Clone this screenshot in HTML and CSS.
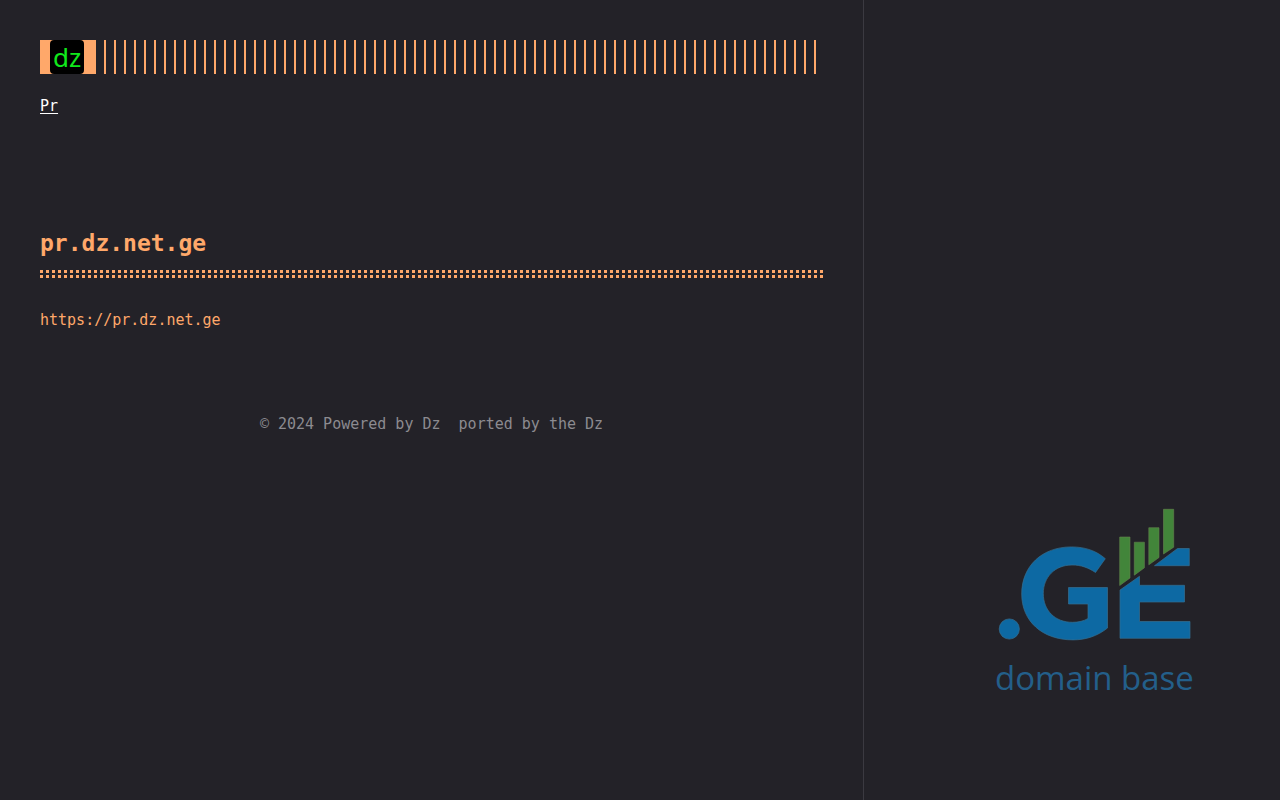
FILE: index.html
```html
<!DOCTYPE html>
<html lang="en">
<head>
<meta charset="utf-8">
<meta name="viewport" content="width=device-width, initial-scale=1">
<title>pr.dz.net.ge</title>
<link rel="stylesheet" href="styles.css">
</head>
<body>
<div class="page">
  <div class="container">
    <header class="header">
      <a class="logo" href="#"><span class="logo-mark">dz</span></a>
      <div class="stripes"></div>
    </header>
    <nav class="menu"><a class="menu-link" href="#">Pr</a></nav>
    <main class="post">
      <h1 class="post-title">pr.dz.net.ge</h1>
      <p class="post-text">https://pr.dz.net.ge</p>
    </main>
    <footer class="footer">© 2024 Powered by Dz&nbsp; ported by the Dz</footer>
  </div>
  <aside class="brand">
    <svg class="brand-logo" viewBox="0 0 220 200" role="img" aria-label=".GE domain base">
      <g fill="#0d69a3" stroke="#356f90" stroke-width="0.7">
        <circle cx="24.3" cy="129" r="10.1"/>
        <path d="M120.300 58.700 L110.500 72.500 C103 67.500 96 65 87 65 C70 65 58.300 77 58.300 93.500 C58.300 110.500 70 122.300 87.500 122.300 C93.500 122.300 99 121 103 118.500 V104 H83.500 V87.500 H122.500 V128 C112.500 136 101 139.900 88 139.900 C57 139.900 36.700 121 36.700 94 C36.700 66 57 46.900 86.500 46.900 C100 46.900 111.500 50.800 120.300 58.700Z"/>
        <path d="M135 90 L154.500 76.300 V85.300 H199.500 V102 H154.500 V121.500 H205 V138.300 H135Z"/>
        <path d="M169.500 65.700 L192.500 48.500 H204.300 V65.700Z"/>
      </g>
      <g fill="#42853a" stroke="#65844d" stroke-width="0.6">
        <path d="M134.700 37 H145 V78 L134.700 85.500Z"/>
        <path d="M149.300 42.200 H159.400 V67.800 L149.300 75.200Z"/>
        <path d="M163.800 27.700 H174 V57.500 L163.800 64.800Z"/>
        <path d="M178.500 9.300 H188.700 V47.200 L178.500 54Z"/>
      </g>
      <text class="brand-text" x="10" y="190">domain base</text>
    </svg>
  </aside>
</div>
</body>
</html>
```
FILE: styles.css
```css
* {
  box-sizing: border-box;
}

body {
  margin: 0;
  background: #232228;
  color: #ffa86a;
  font: 15px/24px "DejaVu Sans Mono", monospace;
}

.page {
  display: grid;
  grid-template-columns: 67.5% 1fr;
  min-height: 100vh;
}

.container {
  padding: 40px;
  border-right: 1px solid #3b3a41;
}

.header {
  display: flex;
  gap: 8px;
}

.logo {
  display: block;
  padding: 0 12px 0 10px;
  background: #ffa86a;
  text-decoration: none;
}

.logo-mark {
  display: block;
  width: 34px;
  height: 34px;
  border-radius: 4px;
  background: #000;
  color: #10e81c;
  font: 26px/34px "Noto Sans", sans-serif;
  text-align: center;
}

.stripes {
  flex: 1;
  background: repeating-linear-gradient(90deg, #ffa86a 0 2px, transparent 2px 10px);
}

.menu {
  margin-top: 20px;
}

.menu-link {
  color: #fff;
  text-underline-offset: 2px;
}

.post {
  padding-top: 111px;
}

.post-title {
  margin: 0;
  padding-bottom: 21px;
  background:
    repeating-linear-gradient(90deg, #ffa86a 0 3px, transparent 3px 6px) left bottom 5px / 100% 3px no-repeat,
    repeating-linear-gradient(90deg, #ffa86a 0 3px, transparent 3px 6px) left bottom / 100% 3px no-repeat;
  font-size: 23px;
  line-height: 28px;
}

.post-text {
  margin: 30px 0 0;
}

.footer {
  margin-top: 80px;
  color: #8c8b90;
  text-align: center;
}

.brand {
  display: flex;
  align-items: flex-end;
  justify-content: flex-end;
  padding: 0 75px 100px 0;
}

.brand-logo {
  display: block;
  width: 220px;
}

.brand-text {
  fill: #235f8a;
  font: 33px "Open Sans", sans-serif;
}
```
